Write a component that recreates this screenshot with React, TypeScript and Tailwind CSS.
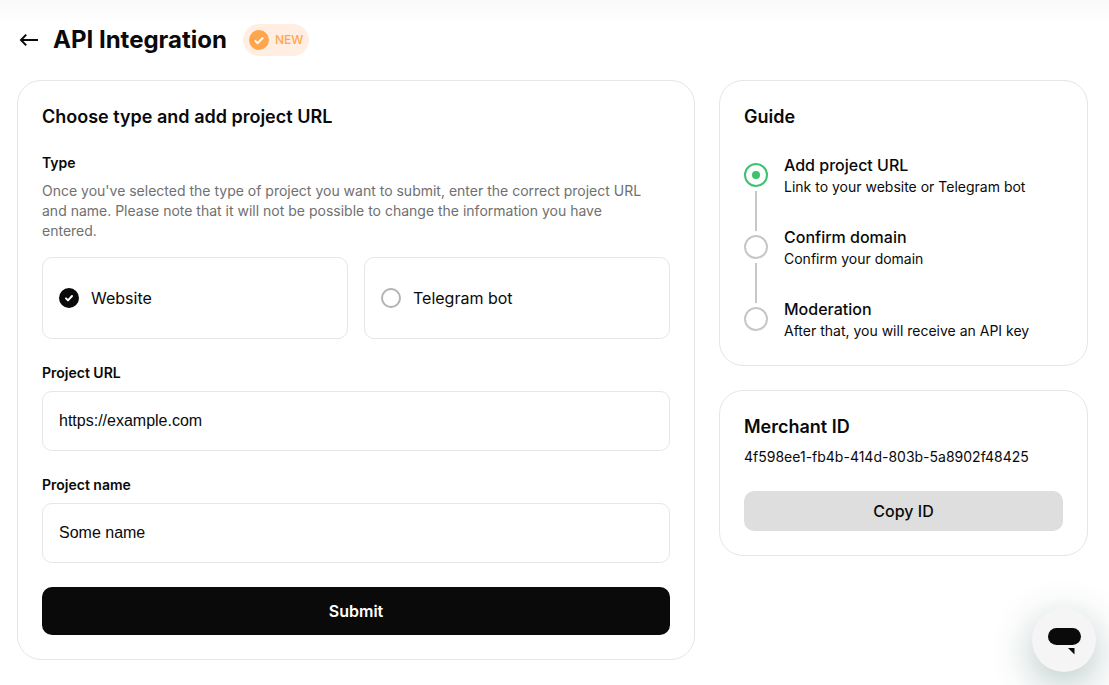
import { useState } from 'react';

const types = [
  { id: 'website', label: 'Website' },
  { id: 'telegram', label: 'Telegram bot' },
];

const steps = [
  { title: 'Add project URL', text: 'Link to your website or Telegram bot', active: true },
  { title: 'Confirm domain', text: 'Confirm your domain', active: false },
  { title: 'Moderation', text: 'After that, you will receive an API key', active: false },
];

function Header() {
  return (
    <header className="flex items-center">
      <a href="#" aria-label="Back" className="mr-3">
        <svg className="size-6" viewBox="0 0 24 24" fill="none" aria-hidden="true">
          <path d="M21 12H4.5M9.2 6.6L4 12l5.2 5.4" stroke="currentColor" strokeWidth="2" />
        </svg>
      </a>
      <h1 className="text-2xl font-bold">API Integration</h1>
      <span className="ml-4 flex h-8 items-center gap-1.5 rounded-full bg-[#ffeee1] px-1.5 text-xs font-medium text-[#ffa64d]">
        <span className="size-5 rounded-full bg-[#ffa64d] text-white">
          <svg className="size-5" viewBox="0 0 20 20" fill="none" aria-hidden="true">
            <path d="M5.8 10.4l2.8 2.7 5.6-5.6" stroke="currentColor" strokeWidth="2" />
          </svg>
        </span>
        NEW
      </span>
    </header>
  );
}

function TypeOption({ id, label, checked, onChange }: any) {
  return (
    <label
      htmlFor={id}
      className="flex h-[82px] cursor-pointer items-center gap-3 rounded-[10px] border border-[#e6e6e6] px-4"
    >
      <span className="relative flex size-5">
        <input
          id={id}
          type="radio"
          name="type"
          checked={checked}
          onChange={onChange}
          className="size-5 appearance-none rounded-full border-2 border-[#b3b3b3] checked:border-[#0a0a0a] checked:bg-[#0a0a0a]"
        />
        {checked && (
          <svg
            className="pointer-events-none absolute inset-0 size-5 text-white"
            viewBox="0 0 20 20"
            fill="none"
            aria-hidden="true"
          >
            <path
              d="M7 10.4l2 2 4-4.4"
              stroke="currentColor"
              strokeWidth="2"
              strokeLinecap="round"
              strokeLinejoin="round"
            />
          </svg>
        )}
      </span>
      <span className="text-base">{label}</span>
    </label>
  );
}

function Field({ id, label, value }: any) {
  return (
    <div className="mt-6">
      <label htmlFor={id} className="block text-sm font-semibold">
        {label}
      </label>
      <input
        id={id}
        type="text"
        defaultValue={value}
        className="mt-2 block h-[60px] w-full rounded-[10px] border border-[#e6e6e6] px-4 font-['Liberation_Sans',Arial,sans-serif] text-base outline-none"
      />
    </div>
  );
}

function ProjectForm() {
  const [type, setType] = useState('website');

  return (
    <form
      onSubmit={(e) => e.preventDefault()}
      className="min-w-0 flex-1 rounded-3xl border border-[#e6e6e6] p-6"
    >
      <h2 className="text-lg leading-6 font-semibold">Choose type and add project URL</h2>
      <fieldset className="mt-6">
        <legend className="text-sm font-semibold">Type</legend>
        <p className="mt-2 pr-4 text-sm text-[#707070]">
          Once you've selected the type of project you want to submit, enter the correct project URL and
          name. Please note that it will not be possible to change the information you have entered.
        </p>
        <div className="mt-4 grid grid-cols-2 gap-4">
          {types.map((t) => (
            <TypeOption key={t.id} {...t} checked={type === t.id} onChange={() => setType(t.id)} />
          ))}
        </div>
      </fieldset>
      <Field id="url" label="Project URL" value="https://example.com" />
      <Field id="name" label="Project name" value="Some name" />
      <button
        type="submit"
        className="mt-6 h-12 w-full rounded-[10px] bg-[#0a0a0a] text-base font-semibold text-white"
      >
        Submit
      </button>
    </form>
  );
}

function Guide() {
  return (
    <section className="rounded-3xl border border-[#e6e6e6] p-6">
      <h2 className="text-lg leading-6 font-semibold">Guide</h2>
      <ol className="mt-6">
        {steps.map((step) => (
          <li key={step.title} className="group flex h-18 gap-4 last:h-11">
            <div className="flex flex-col items-center gap-1 pt-2.5">
              <span
                className={
                  step.active
                    ? 'flex size-6 shrink-0 items-center justify-center rounded-full border-2 border-[#3dc270]'
                    : 'size-6 shrink-0 rounded-full border-2 border-[#c7c7c7]'
                }
              >
                {step.active && <span className="size-2 rounded-full bg-[#3dc270]" />}
              </span>
              <span className="h-10 w-0.5 shrink-0 bg-[#c7c7c7] group-last:hidden" />
            </div>
            <div>
              <h3 className="text-base font-medium">{step.title}</h3>
              <p className="text-sm">{step.text}</p>
            </div>
          </li>
        ))}
      </ol>
    </section>
  );
}

function Merchant() {
  return (
    <section className="rounded-3xl border border-[#e6e6e6] p-6">
      <h2 className="text-lg leading-6 font-semibold">Merchant ID</h2>
      <p className="mt-2 text-sm">4f598ee1-fb4b-414d-803b-5a8902f48425</p>
      <button type="button" className="mt-6 h-10 w-full rounded-[10px] bg-[#dedede] text-base font-medium">
        Copy ID
      </button>
    </section>
  );
}

export default function App() {
  return (
    <div className="min-h-screen bg-white bg-linear-to-b from-[#fafafa] to-white to-[24px] pt-6 pr-[21px] pb-6 pl-[17px] font-[Inter,sans-serif] text-[#0a0a0a]">
      <Header />
      <main className="mt-6 flex items-start gap-6">
        <ProjectForm />
        <aside className="flex w-[369px] flex-col gap-6">
          <Guide />
          <Merchant />
        </aside>
      </main>
      <button
        type="button"
        aria-label="Open chat"
        className="fixed right-[13px] bottom-[13px] size-16 rounded-full bg-[#f5f5f5] shadow-[0_12px_40px_rgba(0,60,60,0.3)]"
      >
        <svg className="size-16" viewBox="0 0 64 64" fill="#0a0a0a" aria-hidden="true">
          <rect x="16" y="20" width="33" height="17" rx="8.5" />
          <path d="M36 40h6.5v6.5z" />
        </svg>
      </button>
    </div>
  );
}
